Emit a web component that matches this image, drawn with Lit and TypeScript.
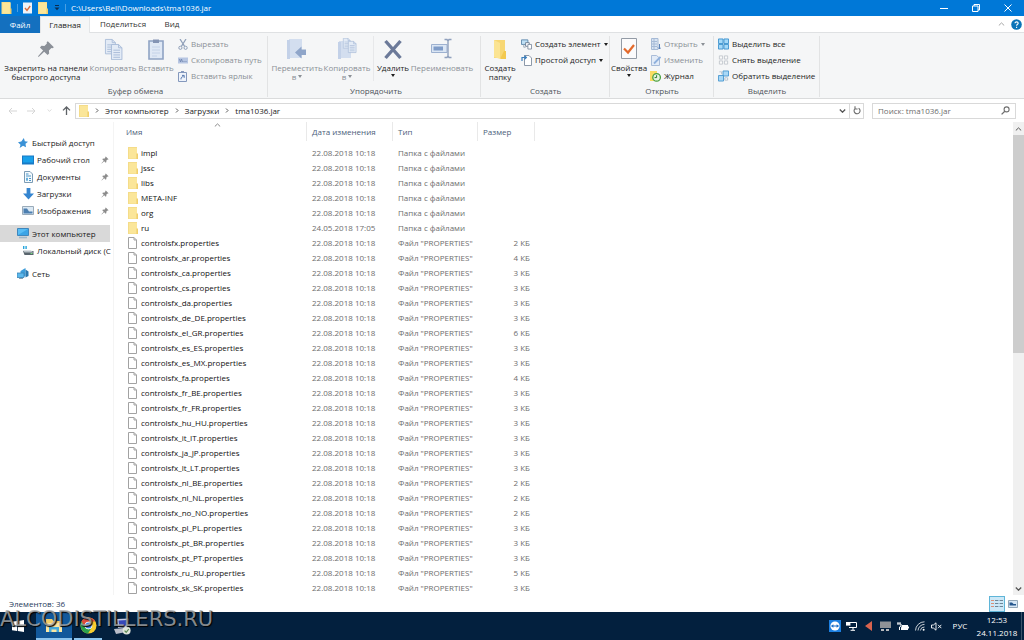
import { LitElement, html, css, svg, nothing, type TemplateResult } from "lit";
import { customElement } from "lit/decorators.js";
import { classMap } from "lit/directives/class-map.js";

type Icon = ReturnType<typeof svg>;

const draw = (w: number, h: number, vb: string, body: Icon) =>
  html`<svg width=${w} height=${h} viewBox=${vb} aria-hidden="true">${body}</svg>`;

const folder = (w = 10, h = 12) =>
  draw(w, h, "0 0 10 12", svg`<path d="M0 0H9V12H0Z" fill="#f4dc8a"/><path d="M1 1H9V11.5H1Z" fill="#fbe699"/><path d="M8.4 6.5H10V12H8.4Z" fill="#f0cf6c"/>`);

const fileIcon = draw(9, 12, "0 0 9 12", svg`<path d="M.5.5H6L8.5 3V11.5H.5Z" fill="#fff" stroke="#a2a2a2"/><path d="M6 .5V3H8.5" fill="none" stroke="#a2a2a2"/>`);

const pin = (s: number, c: string) =>
  draw(s, s, "0 0 16 16", svg`<path d="M9.6 1L15 6.4L13.8 7.4L12.8 7.2L10.6 9.4L10.8 12L9.4 13.4L6.4 10.4L1.4 15L.9 14.5L5.4 9.4L2.6 6.6L4 5.2L6.6 5.4L8.8 3.2L8.6 2Z" fill=${c}/>`);

const docLines = svg`<path d="M.5.5H8L11.5 4V16.5H.5Z" fill="#e3ebf6" stroke="#a9bcd8"/><path d="M8 .5V4H11.5M2.5 6.5H9.5M2.5 9H9.5M2.5 11.5H9.5M2.5 14H9.5" fill="none" stroke="#a9bcd8"/>`;

const I = {
  copy: draw(19, 22, "0 0 19 22", svg`<g transform="translate(1 1) scale(.9)">${docLines}</g><g transform="translate(7 6) scale(.95)">${docLines}</g>`),
  paste: draw(16, 22, "0 0 16 22", svg`<path d="M1 3H15V21H1Z" fill="#dfe8f5" stroke="#8fa3c4" stroke-width="1.6"/><path d="M5 1.5H11V5H5Z" fill="#8494b4"/><path d="M4 9H12M4 12H12M4 15H12M4 18H9" stroke="#c4d2e8"/>`),
  cut: draw(10, 11, "0 0 10 11", svg`<path d="M2 0L6.6 7.4M8 0L3.4 7.4" stroke="#8f9fb8" stroke-width="1.2"/><circle cx="2.4" cy="8.8" r="1.6" fill="none" stroke="#8f9fb8"/><circle cx="7.6" cy="8.8" r="1.6" fill="none" stroke="#8f9fb8"/>`),
  path: draw(10, 7, "0 0 10 7", svg`<path d="M0 .5H10V6.5H0Z" fill="#b7c6e2"/><path d="M1.5 2L2.5 5L3.5 2L4.5 5M5.5 4.5H6.5M7.5 4.5H8.5" fill="none" stroke="#6d83ae" stroke-width=".8"/>`),
  shortcut: draw(9, 11, "0 0 9 11", svg`<path d="M.5 1.5H8.5V10.5H.5Z" fill="#eef3fb" stroke="#8498bd"/><path d="M3 0H6V2H3Z" fill="#8498bd"/><path d="M3 8.4C2.8 6.4 4 5.6 5.4 5.6M4 4.4H6.2V6.8" fill="none" stroke="#5577ae"/>`),
  move: draw(22, 22, "0 0 22 22", svg`<path d="M3 1H16V20H3Z" fill="#d3deef"/><path d="M1 2H4V21H1Z" fill="#c3d1e8"/><path d="M20 11.5V17H15.5V20.5L9 14.5L15.5 8.5V11.5Z" fill="#8fa5c9"/>`),
  copyTo: draw(20, 22, "0 0 20 22", svg`<path d="M2 3H14V20H2Z" fill="#d3deef"/><path d="M1 4H4V21H1Z" fill="#c3d1e8"/><g transform="translate(6 0) scale(.62)">${docLines}</g><g transform="translate(11 3) scale(.7)">${docLines}</g>`),
  del: draw(20, 22, "0 0 20 22", svg`<path d="M2.5 3L17.5 20M17.5 3L2.5 20" stroke="#6c7a99" stroke-width="3.4"/>`),
  rename: draw(22, 22, "0 0 22 22", svg`<path d="M.5 6.5H16V14.5H.5Z" fill="#dbe6f4" stroke="#9db1d0"/><path d="M2.5 8.5H12V12.5H2.5Z" fill="#7f9cc8"/><path d="M13.5 1.5H16L17 3L18 1.5H20.5M17 2.5V18.5M13.5 19.5H16L17 18L18 19.5H20.5" fill="none" stroke="#8fa0bd" stroke-width="1.4"/>`),
  newFolder: draw(14, 22, "0 0 14 22", svg`<path d="M1 2H12V20H1Z" fill="#f7d774"/><path d="M1 2L7 5V21L1 19Z" fill="#fbe493"/><path d="M11 13H13V21H7Z" fill="#f3c94f"/>`),
  newItem: draw(12, 12, "0 0 12 12", svg`<path d="M.5 1.5H7.5V6.5H.5Z" fill="#bfe0f5" stroke="#5b87ab"/><path d="M5 4.5H9V8.5H5Z" fill="#fff" stroke="#6d7f94"/><path d="M7.5 6.5H11.5V11.5H7.5Z" fill="#fff" stroke="#8390a3"/><path d="M3 6.5V9.5H5" fill="none" stroke="#9aa6b5"/>`),
  easy: draw(11, 12, "0 0 11 12", svg`<path d="M3.5 1.5H8L10.5 4V11.5H3.5Z" fill="#fff" stroke="#8d99a9"/><path d="M1 7V3.5H5M3.4 1.6L5.4 3.5L3.4 5.4" fill="none" stroke="#3b7fbd" stroke-width="1.2"/>`),
  props: draw(16, 21, "0 0 16 21", svg`<path d="M.5.5H15.5V20.5H.5Z" fill="#fbfbfc" stroke="#939ba6"/><path d="M3 10.5L7 14.5L13 7" fill="none" stroke="#e36a2c" stroke-width="2.2"/>`),
  open: draw(10, 12, "0 0 10 12", svg`<path d="M.5.5H7V11.5H.5Z" fill="#d8e4f3" stroke="#a6bad6"/><path d="M1 3.5H6M1 6H6M1 8.5H6M3 1V11" stroke="#a6bad6"/><path d="M8.5 6V11M7 9.5L8.5 11L10 9.5" fill="none" stroke="#5c82b8"/>`),
  edit: draw(10, 12, "0 0 10 12", svg`<path d="M.5 1.5H5.5L8.5 4V11.5H.5Z" fill="#e2ebf7" stroke="#a9bcd8"/><path d="M3 9.5L9.5 3" stroke="#8fb0dc" stroke-width="1.8"/>`),
  history: draw(11, 12, "0 0 11 12", svg`<path d="M0 1H7V11H0Z" fill="#f9dc62"/><circle cx="6.6" cy="7.4" r="3.8" fill="#e5f3df" stroke="#4aa03f" stroke-width="1.3"/><path d="M6.6 5.2V7.6H4.6" fill="none" stroke="#2f7d2b"/>`),
  selAll: draw(12, 12, "0 0 12 12", svg`<path d="M.5.5H5.5V5.5H.5ZM6.5.5H11.5V5.5H6.5ZM.5 6.5H5.5V11.5H.5ZM6.5 6.5H11.5V11.5H6.5Z" fill="#a5d9f8" stroke="#3d93cf"/>`),
  selNone: draw(12, 12, "0 0 12 12", svg`<path d="M1.5 1.5H5V5H1.5ZM7 1.5H10.5V5H7ZM1.5 7H5V10.5H1.5ZM7 7H10.5V10.5H7Z" fill="#fafafa" stroke="#bdc2c9" stroke-width=".9"/>`),
  selInv: draw(12, 12, "0 0 12 12", svg`<path d="M5.5.5H11.5V6H5.5ZM.5 5.5H6V11.5H.5Z" fill="#a9d8f7" stroke="#4a98d0"/><path d="M1.5 1.5H4V4M7.5 8H10.5V10.5H7.5Z" fill="#fff" stroke="#a9b6c5" stroke-width=".9"/>`),
  star: draw(10, 10, "0 0 12 12", svg`<path d="M7 0L8.2 3.8L12 4.4L9 7L9.6 11L6 9.2L2 12L3 8L0 5L4 4.2Z" fill="#3a92d6"/>`),
  desktop: draw(12, 10, "0 0 12 10", svg`<path d="M0 .5H12V9.5H0Z" fill="#1979c4"/><path d="M1 1.5H11V7.5H1Z" fill="#19a0ea"/>`),
  docs: draw(9, 12, "0 0 9 12", svg`<path d="M.5.5H6L8.5 3V11.5H.5Z" fill="#f5fafd" stroke="#7c9cb5"/><path d="M2 3H4.5M2 5H7M5 7.5H7M5 9.5H7" stroke="#4b95c8"/><path d="M2 6.8H4V9.8H2Z" fill="#68b0dc"/>`),
  down: draw(11, 12, "0 0 11 12", svg`<path d="M3.6 0H7.4V5.5H11L5.5 11.6L0 5.5H3.6Z" fill="#3585d0"/>`),
  pics: draw(12, 9, "0 0 12 9", svg`<path d="M.5.5H11.5V8.5H.5Z" fill="#dbe9f4" stroke="#9aabb9"/><path d="M1.5 7.5V2.5H5L7 5.5H10.5V7.5Z" fill="#4d7fb0"/>`),
  pc: draw(12, 11, "0 0 12 11", svg`<path d="M.5.5H11.5V7.5H.5Z" fill="#58bdf5" stroke="#3f87bd"/><path d="M1 7L11 1V7Z" fill="#3aa4e6"/><path d="M2 9.5H10" stroke="#9eb7c9" stroke-width="1.6"/>`),
  disk: draw(12, 10, "0 0 12 10", svg`<path d="M1 0H2.4V3H1ZM3.4 0H4.8V3H3.4Z" fill="#28a6dd"/><path d="M1 5H11.5V9H2.5Z" fill="#59656d"/><path d="M1 4.6H9L11.5 6.4H2.6Z" fill="#b9c2c8"/><path d="M8.6 7.5H10.4" stroke="#74e07f"/>`),
  net: draw(12, 11, "0 0 12 11", svg`<path d="M3.5 3L8.5 0V8L3.5 10.6Z" fill="#3c9ddb"/><path d="M8.5 1.5L11.5 3.5V8L8.5 9.5Z" fill="#2c78ae"/><path d="M0 5H7V9.5H0Z" fill="#5bb8ec" stroke="#3b83b5" stroke-width=".8"/><path d="M2 10.6H6" stroke="#7b98ab"/>`),
  check: draw(9, 12, "0 0 9 12", svg`<path d="M0 .5H9V11.5H0Z" fill="#eef2f7"/><path d="M2 6L4 8.4L7.2 4" fill="none" stroke="#d96a3b" stroke-width="1.4"/>`),
  qat: draw(6, 6, "0 0 6 6", svg`<path d="M1 .5H5" stroke="#0b2c50"/><path d="M.5 2.6H5.5L3 5.2Z" fill="#0b2c50"/>`),
  min: draw(8, 10, "0 0 8 10", svg`<path d="M0 5.5H8" stroke="#fff"/>`),
  max: draw(8, 8, "0 0 8 8", svg`<path d="M.5 2H6V7.5H.5ZM2 2V.5H7.5V6H6" fill="none" stroke="#fff"/>`),
  close: draw(8, 8, "0 0 8 8", svg`<path d="M.5.5L7.5 7.5M7.5.5L.5 7.5" stroke="#fff"/>`),
  up: (c: string) => draw(7, 4, "0 0 7 4", svg`<path d="M.8 3.5L3.5.9L6.2 3.5" fill="none" stroke=${c}/>`),
  chevDown: (c: string) => draw(7, 4, "0 0 7 4", svg`<path d="M.8.5L3.5 3.2L6.2.5" fill="none" stroke=${c} stroke-width="1.3"/>`),
  help: draw(11, 11, "0 0 11 11", svg`<circle cx="5.5" cy="5.5" r="5.3" fill="#0b74b8"/><path d="M4 4.2C4 2.4 7.2 2.4 7.2 4.2C7.2 5.3 5.6 5.3 5.6 6.8M5.6 7.8V8.9" fill="none" stroke="#fff" stroke-width="1.1"/>`),
  back: draw(9, 8, "0 0 9 8", svg`<path d="M9 4H1M4 1L1 4L4 7" fill="none" stroke="#d5d5d5"/>`),
  fwd: draw(9, 8, "0 0 9 8", svg`<path d="M0 4H8M5 1L8 4L5 7" fill="none" stroke="#d5d5d5"/>`),
  upArrow: draw(9, 9, "0 0 9 9", svg`<path d="M4.5 9V1M1 4.4L4.5 1L8 4.4" fill="none" stroke="#5e6266" stroke-width="1.3"/>`),
  crumb: draw(4, 5, "0 0 4 5", svg`<path d="M1 .5L3 2.5L1 4.5" fill="none" stroke="#5a5a5a"/>`),
  refresh: draw(8, 9, "0 0 8 9", svg`<path d="M5.6 2.2A3 3 0 1 1 2 2.6M2 .2V3H4.6" fill="none" stroke="#6a6a6a" stroke-width="1.1"/>`),
  search: draw(9, 9, "0 0 9 9", svg`<circle cx="5.6" cy="3.4" r="2.5" fill="none" stroke="#6f6f6f" stroke-width="1.1"/><path d="M3.8 5.2L.6 8.4" stroke="#6f6f6f" stroke-width="1.3"/>`),
  details: draw(12, 10, "0 0 12 10", svg`<path d="M0 1.5H3M0 4.5H3M0 7.5H3" stroke="#d88f78"/><path d="M4 1.5H7.4M8.6 1.5H12M4 4.5H7.4M8.6 4.5H12M4 7.5H7.4M8.6 7.5H12" stroke="#6f8798"/>`),
  tiles: draw(10, 8, "0 0 10 8", svg`<path d="M.5.5H9.5V7.5H.5Z" fill="#d7e7f5" stroke="#93a7b8"/><path d="M1.5 5.5V2.5H4L5.6 4H8V5.5Z" fill="#27588f"/>`),
  win: draw(12, 12, "0 0 12 12", svg`<path d="M0 1.7L5 1V5.6H0ZM5.8.9L12 0V5.6H5.8ZM0 6.4H5V11L0 10.3ZM5.8 6.4H12V12L5.8 11.1Z" fill="#fff"/>`),
  explorer: draw(18, 15, "0 0 18 15", svg`<path d="M1 1H7L8.5 3H17V14H1Z" fill="#f3cf6a"/><path d="M1 5H17V14H1Z" fill="#fbe7a3"/><path d="M4 14V9H14V14H11.5V11.5H6.5V14Z" fill="#45a9dc"/>`),
  chrome: draw(17, 17, "0 0 17 17", svg`<circle cx="8.5" cy="8.5" r="8" fill="#f8cc2e"/><path d="M1.6 4.5A8 8 0 0 1 15.4 4.5H8.5L5 10.5Z" fill="#dd4b3e"/><path d="M1.6 4.5A8 8 0 0 0 8 16.5L11.8 10.6L8.5 12.4L5 10.5Z" fill="#2ba24c"/><circle cx="8.5" cy="8.5" r="3.8" fill="#fff"/><circle cx="8.5" cy="8.5" r="3" fill="#4285f4"/>`),
  putty: draw(17, 17, "0 0 17 17", svg`<path d="M3 1L15 .5L14 9L4 10Z" fill="#c7cde8"/><path d="M4.5 2.4L13.4 2L12.6 7.6L5.3 8.4Z" fill="#3747b8"/><path d="M0 11L10 10L12 14L2 16Z" fill="#b9bdc9"/><circle cx="12.6" cy="12.6" r="4" fill="#dfe3da"/><path d="M10.6 12.6L12.2 14.4L14.8 11" fill="none" stroke="#5b8b53" stroke-width="1.2"/>`),
  tv: draw(12, 12, "0 0 12 12", svg`<path d="M0 0H12V12H0Z" fill="#1c7fe0"/><circle cx="6" cy="6" r="4.6" fill="#fff"/><path d="M1.8 6L4.4 4.2V5.4H7.6V4.2L10.2 6L7.6 7.8V6.6H4.4V7.8Z" fill="#1c6fc8"/>`),
  monitor: draw(11, 10, "0 0 11 10", svg`<path d="M3 1.5H10.5V6.5H3M7 6.5V9M4.6 9.3H9" fill="none" stroke="#fff"/><path d="M0 1H4.4V4.6H0Z" fill="#fff"/>`),
  red: draw(8, 10, "0 0 8 10", svg`<path d="M7 0V10L0 5Z" fill="#d9634e"/>`),
  pcGray: draw(11, 10, "0 0 11 10", svg`<path d="M0 .5H11V7H0Z" fill="#8f9296"/><path d="M1 8H4V10H1ZM6 8H9V10H6Z" fill="#b8babd"/>`),
  battery: draw(12, 9, "0 0 12 9", svg`<path d="M1 0V2M3 0V2M0 2H4V4L2.5 5V8" fill="none" stroke="#fff"/><path d="M5 3H11V8H4V6Z" fill="#fff"/><path d="M11 4.5H12V6.5H11Z" fill="#fff"/>`),
  wifi: draw(10, 10, "0 0 10 10", svg`<path d="M.5 9.5A9 9 0 0 1 9.5 .8M3 9.5A6.5 6.5 0 0 1 9.5 3.4M5.4 9.5A4 4 0 0 1 9.5 6" fill="none" stroke="#c5ccd3"/><circle cx="8.6" cy="8.8" r="1" fill="#fff"/>`),
  mute: draw(11, 9, "0 0 11 9", svg`<path d="M.5 3H2.4L5 .8V8.2L2.4 6H.5Z" fill="none" stroke="#fff" stroke-width=".9"/><path d="M7 2.8L10.4 6.2M10.4 2.8L7 6.2" stroke="#fff" stroke-width=".9"/>`),
};

interface Cmd { icon: TemplateResult; label: string; off?: boolean; menu?: boolean }

@customElement("ribbon-button")
class RibbonButton extends LitElement {
  static properties = { cmd: { attribute: false }, big: { type: Boolean } };
  declare cmd: Cmd;
  declare big: boolean;
  static styles = css`
    :host { display: block; }
    button {
      font: inherit; color: #1e1e1e; background: none; border: 0; padding: 0; margin: 0;
      display: flex; align-items: center; gap: 3px; height: 16px; white-space: nowrap; width: 100%;
    }
    button:disabled { color: #8b9096; }
    .big { flex-direction: column; height: auto; gap: 2px; line-height: 9px; }
    .icon { display: flex; width: 11px; justify-content: center; }
    .big .icon { width: auto; height: 25px; align-items: center; }
    .arrow { width: 0; height: 0; border: 2px solid transparent; border-top: 3px solid currentColor; border-bottom: 0; display: inline-block; }
    .big .inline { margin: 0 0 2px 2px; }
    .text { white-space: pre; text-align: center; }
  `;
  render() {
    const { icon, label, off, menu } = this.cmd;
    const twoLines = this.big && menu && label.includes("\n");
    return html`<button class=${classMap({ big: this.big })} ?disabled=${off}>
      <span class="icon">${icon}</span>
      <span class="text">${label}${twoLines ? html`<i class="arrow inline"></i>` : nothing}</span>
      ${menu && !twoLines ? html`<i class="arrow"></i>` : nothing}
    </button>`;
  }
}

const langs = ["", "ar", "ca", "cs", "da", "de_DE", "el_GR", "es_ES", "es_MX", "fa", "fr_BE", "fr_FR", "hu_HU", "it_IT", "ja_JP", "lt_LT", "nl_BE", "nl_NL", "no_NO", "pl_PL", "pt_BR", "pt_PT", "ru_RU", "sk_SK"];
const sizes = [2, 4, 3, 3, 3, 3, 6, 3, 3, 4, 3, 3, 3, 3, 3, 3, 2, 2, 2, 3, 3, 3, 5, 3];
const rows = [
  ...["impl", "jssc", "libs", "META-INF", "org", "ru"].map((name) => ({
    name, dir: true, date: name === "ru" ? "24.05.2018 17:05" : "22.08.2018 10:18", type: "Папка с файлами", size: "",
  })),
  ...langs.map((l, i) => ({
    name: `controlsfx${l ? "_" + l : ""}.properties`, dir: false, date: "22.08.2018 10:18", type: 'Файл "PROPERTIES"', size: `${sizes[i]} КБ`,
  })),
];

@customElement("app-root")
class AppRoot extends LitElement {
  static styles = css`
    :host {
      display: flex; flex-direction: column; height: 100vh; overflow: hidden; background: #fff; color: #1a1a1a;
      font: 8px/12px "Open Sans", "Noto Sans", sans-serif;
    }
    * { box-sizing: border-box; }
    svg { display: block; flex: none; }
    button, input { font: inherit; color: inherit; background: none; border: 0; padding: 0; margin: 0; }
    a { color: inherit; text-decoration: none; }
    .icon { display: flex; align-items: center; justify-content: center; }

    .title { display: flex; align-items: center; flex: none; height: 16px; background: #0078d7; color: #fff; padding-left: 1px; }
    .title .sep { width: 1px; height: 8px; background: #4a9fe2; margin: 0 5px; }
    .quick { display: flex; align-items: center; gap: 6px; }
    .path { margin: 0; font-size: 8px; font-weight: 400; flex: 1; white-space: nowrap; }
    .win { width: 32px; height: 16px; }

    .tabs { display: flex; flex: none; height: 17px; align-items: stretch; }
    .tabs button { width: 66px; border-bottom: 1px solid #dfe1e3; color: #333; }
    .tabs .menu { width: 40px; background: #1470bf; color: #fff; border: 0; }
    .tabs .active { width: 50px; background: #f5f6f7; border: 1px solid #e3e5e7; border-bottom: 0; color: #1e1e1e; }
    .tabs .view { width: 32px; }
    .tabs .rest { flex: 1; display: flex; justify-content: flex-end; align-items: center; gap: 6px; padding-right: 2px; border-bottom: 1px solid #dfe1e3; }

    .ribbon { display: flex; flex: none; height: 66px; background: #f5f6f7; border-bottom: 1px solid #dadbdc; padding: 3px 0 1px; }
    .group { display: flex; flex-direction: column; border-right: 1px solid #e2e3e4; padding-left: 4px; }
    .cmds { display: flex; flex: 1; }
    .caption { text-align: center; color: #4d5358; line-height: 12px; }
    .stack { padding-left: 3px; }
    .divider { width: 1px; background: #e7e8ea; margin: 0 1px 4px; }
    .g1 { width: 268px; } .g2 { width: 213px; } .g3 { width: 129px; } .g4 { width: 104px; } .g5 { width: 106px; }
    .g3, .g4, .g5 { padding-left: 1px; }
    .w84 { width: 84px; } .w60 { width: 62px; } .w50 { width: 50px; } .w36 { width: 36px; }

    .address { display: flex; align-items: center; flex: none; height: 23px; padding: 0 8px; gap: 8px; }
    .nav { display: flex; align-items: center; width: 63px; justify-content: space-between; margin-right: -4px; }
    .nav button { display: flex; }
    .crumbs { flex: 1; display: flex; align-items: center; height: 16px; border: 1px solid #d9d9d9; padding-left: 3px; }
    .crumbs ol { display: flex; list-style: none; margin: 0; padding: 0; flex: 1; }
    .crumbs li { display: flex; align-items: center; gap: 6px; padding-left: 6px; }
    .crumbs button { width: 14px; height: 14px; }
    .crumbs .reload { border-left: 1px solid #d9d9d9; }
    .search { display: flex; align-items: center; width: 144px; height: 16px; border: 1px solid #d9d9d9; padding: 0 5px; }
    .search input { flex: 1; min-width: 0; outline: 0; }
    .search input::placeholder { color: #6d6d6d; opacity: 1; }

    .body { display: flex; flex: 1; min-height: 0; }
    aside { width: 114px; flex: none; padding: 12px 3px 0 0; border-right: 1px solid #f4f4f4; display: flex; flex-direction: column; gap: 6px; }
    aside a { display: flex; align-items: center; height: 17px; padding-left: 17px; gap: 3px; white-space: nowrap; }
    aside .icon { width: 12px; flex: none; }
    aside .sub { padding-left: 22px; }
    aside .name { flex: 1; }
    aside .sel { background: #d9d9d9; }
    aside .pinned { padding-right: 1px; }

    .list { flex: 1; min-width: 0; overflow: hidden; padding-left: 7px; }
    table { border-collapse: collapse; table-layout: fixed; width: 414px; }
    th, td { padding: 0 5px; font-weight: 400; text-align: left; white-space: nowrap; height: 15px; line-height: 15px; color: #6d6d6d; }
    th { position: relative; height: 23px; line-height: 20px; color: #4c607a; vertical-align: top; background: linear-gradient(#e9e9e9, #e9e9e9) right top / 1px 19px no-repeat; }
    th .sort { position: absolute; left: 50%; top: 1px; }
    td:first-child { color: #111; }
    td:last-child { text-align: right; }
    .c1 { width: 186px; } .c2 { width: 86px; } .c3 { width: 85px; } .c4 { width: 57px; }
    .file { display: flex; align-items: center; gap: 3px; padding-left: 1px; }
    .file .icon { width: 11px; }

    .scroll { width: 11px; flex: none; background: #f0f0f0; display: flex; flex-direction: column; align-items: center; }
    .scroll button { height: 13px; width: 11px; }
    .scroll .thumb { width: 100%; flex: 0 0 46%; background: #cdcdcd; }
    .scroll .track { flex: 1; }

    .status { display: flex; align-items: center; flex: none; height: 17px; padding: 0 3px 0 9px; color: #1f3a5c; }
    .status p { margin: 0; flex: 1; }
    .status button { width: 16px; height: 16px; }
    .status .on { background: #cce8f7; border: 1px solid #5fb5d8; }

    .taskbar { position: relative; display: flex; align-items: stretch; flex: none; height: 28px; background: #03203e; color: #fff; }
    .app { width: 36px; }
    .app.current { background: #12589b; border-bottom: 2px solid #8cc4ee; }
    .app.running { width: 28px; margin: 0 2px; border-bottom: 2px solid #8cc4ee; }
    .tray { display: flex; align-items: center; margin-left: auto; }
    .tray .icon { width: 17px; }
    .lang { width: 30px; text-align: center; }
    .clock { width: 46px; text-align: center; line-height: 13px; padding-right: 2px; }
    .peek { width: 1px; height: 28px; background: #3b5269; margin-right: 2px; }
    .mark { position: absolute; left: 0; top: -5px; font: 21px/24px "DejaVu Sans", sans-serif; color: #a9acaecc; text-shadow: 1px 1px 1px #000; pointer-events: none; }
  `;

  big(c: Cmd, w: string) {
    return html`<ribbon-button class=${w} big .cmd=${c}></ribbon-button>`;
  }
  stack(...cmds: Cmd[]) {
    return html`<div class="stack">${cmds.map((c) => html`<ribbon-button .cmd=${c}></ribbon-button>`)}</div>`;
  }
  group(cls: string, caption: string, body: TemplateResult) {
    return html`<section class="group ${cls}"><div class="cmds">${body}</div><div class="caption">${caption}</div></section>`;
  }
  place(icon: TemplateResult, name: string, o: { sub?: boolean; sel?: boolean; pinned?: boolean } = {}) {
    return html`<a href="#" class=${classMap({ sub: !!o.sub, sel: !!o.sel, pinned: !!o.pinned })}>
      <span class="icon">${icon}</span><span class="name">${name}</span>${o.pinned ? pin(8, "#8c8c8c") : nothing}</a>`;
  }

  render() {
    return html`
      <header class="title">
        ${folder(11, 12)}<span class="sep"></span>
        <span class="quick">${I.check}${folder(10, 12)}${I.qat}</span><span class="sep"></span>
        <h1 class="path">C:\\Users\\Bell\\Downloads\\tma1036.jar</h1>
        <button class="icon win" aria-label="Свернуть">${I.min}</button>
        <button class="icon win" aria-label="Свернуть в окно">${I.max}</button>
        <button class="icon win" aria-label="Закрыть">${I.close}</button>
      </header>
      <nav class="tabs">
        <button class="menu">Файл</button><button class="active">Главная</button><button>Поделиться</button><button class="view">Вид</button>
        <div class="rest">${I.up("#a5a5a5")}${I.help}</div>
      </nav>
      <div class="ribbon">
        ${this.group("g1", "Буфер обмена", html`
          ${this.big({ icon: pin(18, "#8b9098"), label: "Закрепить на панели\nбыстрого доступа" }, "w84")}
          ${this.big({ icon: I.copy, label: "Копировать", off: true }, "w50")}
          ${this.big({ icon: I.paste, label: "Вставить", off: true }, "w36")}
          ${this.stack({ icon: I.cut, label: "Вырезать", off: true }, { icon: I.path, label: "Скопировать путь", off: true }, { icon: I.shortcut, label: "Вставить ярлык", off: true })}`)}
        ${this.group("g2", "Упорядочить", html`
          ${this.big({ icon: I.move, label: "Переместить\nв", off: true, menu: true }, "w50")}
          ${this.big({ icon: I.copyTo, label: "Копировать\nв", off: true, menu: true }, "w50")}
          <span class="divider"></span>
          ${this.big({ icon: I.del, label: "Удалить", menu: true }, "w36")}
          ${this.big({ icon: I.rename, label: "Переименовать", off: true }, "w60")}`)}
        ${this.group("g3", "Создать", html`
          ${this.big({ icon: I.newFolder, label: "Создать\nпапку" }, "w36")}
          ${this.stack({ icon: I.newItem, label: "Создать элемент", menu: true }, { icon: I.easy, label: "Простой доступ", menu: true })}`)}
        ${this.group("g4", "Открыть", html`
          ${this.big({ icon: I.props, label: "Свойства", menu: true }, "w36")}
          ${this.stack({ icon: I.open, label: "Открыть", off: true, menu: true }, { icon: I.edit, label: "Изменить", off: true }, { icon: I.history, label: "Журнал" })}`)}
        ${this.group("g5", "Выделить", html`
          ${this.stack({ icon: I.selAll, label: "Выделить все" }, { icon: I.selNone, label: "Снять выделение" }, { icon: I.selInv, label: "Обратить выделение" })}`)}
      </div>
      <div class="address">
        <div class="nav">
          <button aria-label="Назад" disabled>${I.back}</button><button aria-label="Вперёд" disabled>${I.fwd}</button>
          <button aria-label="Последние расположения">${draw(5, 3, "0 0 7 4", svg`<path d="M.8.5L3.5 3.2L6.2.5" fill="none" stroke="#ccc"/>`)}</button>
          <button aria-label="Вверх">${I.upArrow}</button>
        </div>
        <div class="crumbs">
          ${folder(10, 12)}
          <ol>${["Этот компьютер", "Загрузки", "tma1036.jar"].map((c) => html`<li>${I.crumb}<a href="#">${c}</a></li>`)}</ol>
          <button class="icon" aria-label="Предыдущие расположения">${I.chevDown("#555")}</button>
          <button class="icon reload" aria-label="Обновить">${I.refresh}</button>
        </div>
        <label class="search"><input type="search" aria-label="Поиск" placeholder="Поиск: tma1036.jar" />${I.search}</label>
      </div>
      <div class="body">
        <aside>
          <div>
            ${this.place(I.star, "Быстрый доступ")}
            ${this.place(I.desktop, "Рабочий стол", { sub: true, pinned: true })}
            ${this.place(I.docs, "Документы", { sub: true, pinned: true })}
            ${this.place(I.down, "Загрузки", { sub: true, pinned: true })}
            ${this.place(I.pics, "Изображения", { sub: true, pinned: true })}
          </div>
          <div>
            ${this.place(I.pc, "Этот компьютер", { sel: true })}
            ${this.place(I.disk, "Локальный диск (C", { sub: true })}
          </div>
          <div>${this.place(I.net, "Сеть")}</div>
        </aside>
        <main class="list">
          <table>
            <thead><tr>
              <th class="c1">Имя<span class="sort">${I.up("#8a8a8a")}</span></th><th class="c2">Дата изменения</th><th class="c3">Тип</th><th class="c4">Размер</th>
            </tr></thead>
            <tbody>${rows.map((r) => html`<tr>
              <td><span class="file"><span class="icon">${r.dir ? folder(10, 12) : fileIcon}</span>${r.name}</span></td>
              <td>${r.date}</td><td>${r.type}</td><td>${r.size}</td></tr>`)}</tbody>
          </table>
        </main>
        <div class="scroll">
          <button class="icon" aria-label="Прокрутить вверх">${I.up("#555")}</button>
          <div class="thumb"></div><div class="track"></div>
          <button class="icon" aria-label="Прокрутить вниз">${I.chevDown("#555")}</button>
        </div>
      </div>
      <footer class="status">
        <p>Элементов: 36</p>
        <button class="icon on" aria-label="Таблица">${I.details}</button>
        <button class="icon" aria-label="Крупные значки">${I.tiles}</button>
      </footer>
      <div class="taskbar">
        <button class="icon app" aria-label="Пуск">${I.win}</button>
        <button class="icon app current" aria-label="Проводник">${I.explorer}</button>
        <button class="icon app running" aria-label="Chrome">${I.chrome}</button>
        <button class="icon app" aria-label="PuTTY">${I.putty}</button>
        <div class="tray">
          ${[I.tv, I.monitor, I.red, I.pcGray, I.battery, I.wifi, I.mute].map((i) => html`<span class="icon">${i}</span>`)}
          <span class="lang">РУС</span>
          <time class="clock">12:53<br />24.11.2018</time>
          <span class="peek"></span>
        </div>
        <span class="mark">ALCODISTILLERS.RU</span>
      </div>
    `;
  }
}
